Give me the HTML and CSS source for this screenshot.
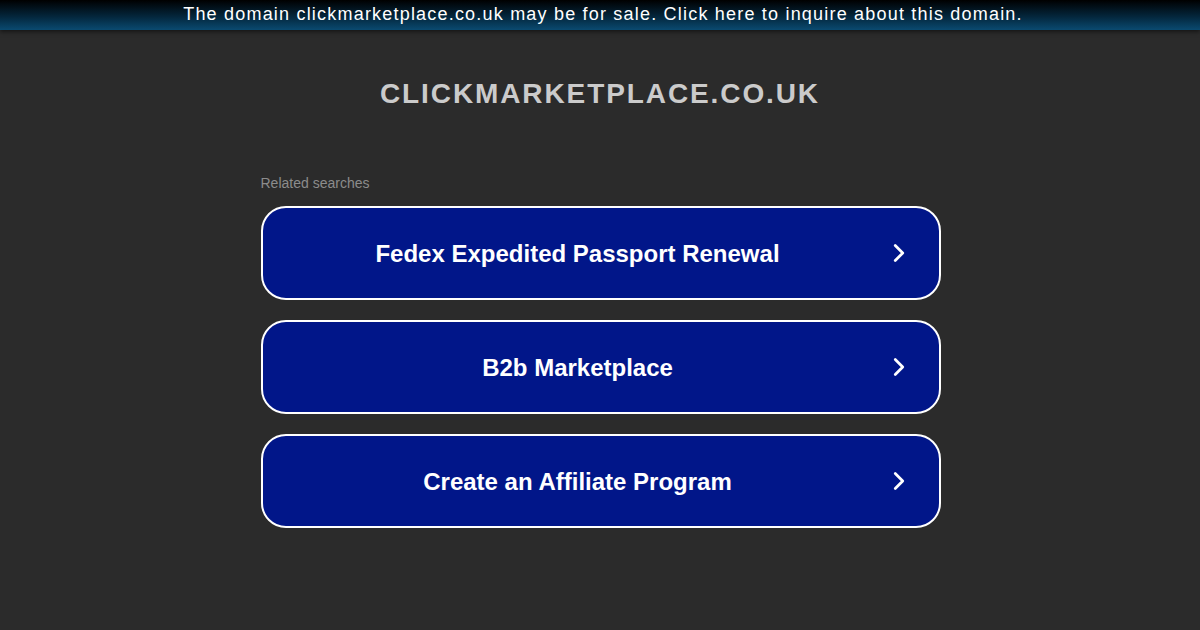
FILE: index.html
```html
<!doctype html>
<html lang="en">
  <head>
    <meta charset="UTF-8" />
    <meta name="viewport" content="width=device-width, initial-scale=1.0" />
    <title>clickmarketplace.co.uk</title>
    <link rel="stylesheet" href="styles.css">
  </head>
  <body>
    <div class="sale-bar">The domain clickmarketplace.co.uk may be for sale. Click here to inquire about this domain.</div>

    <h1 class="domain">clickmarketplace.co.uk</h1>

    <div class="searches">
      <div class="label">Related searches</div>
      <a class="search" href="#">
        <span>Fedex Expedited Passport Renewal</span>
        <svg class="arrow" viewBox="0 0 16 16"><path d="M5 2 L11 8 L5 14" /></svg>
      </a>
      <a class="search" href="#">
        <span>B2b Marketplace</span>
        <svg class="arrow" viewBox="0 0 16 16"><path d="M5 2 L11 8 L5 14" /></svg>
      </a>
      <a class="search" href="#">
        <span>Create an Affiliate Program</span>
        <svg class="arrow" viewBox="0 0 16 16"><path d="M5 2 L11 8 L5 14" /></svg>
      </a>
    </div>
  </body>
</html>
```

FILE: styles.css
```css
body {
  margin: 0;
  background-color: #2b2b2b;
  font-family: Arial, "Liberation Sans", sans-serif;
}
.sale-bar {
  height: 30px;
  line-height: 28px;
  padding-left: 6px;
  text-align: center;
  color: #fff;
  font-size: 18px;
  letter-spacing: 1.2px;
  background: linear-gradient(to bottom, #000 0%, #04263c 55%, #0a4a70 100%);
  box-shadow: 0 2px 4px rgba(0, 0, 0, 0.5);
}
.domain {
  margin: 47px 0 0;
  text-align: center;
  text-transform: uppercase;
  color: #cbcbcb;
  font-size: 28px;
  letter-spacing: 1.9px;
  line-height: 34px;
}
.searches {
  width: 680px;
  margin: 64px auto 0;
  padding-left: 1px;
}
.label {
  color: #8c8c8c;
  font-size: 14px;
  line-height: 16px;
  margin-bottom: 15px;
}
.search {
  display: flex;
  align-items: center;
  justify-content: center;
  position: relative;
  box-sizing: border-box;
  height: 94px;
  padding-top: 2px;
  margin-bottom: 20px;
  border: 2px solid #fff;
  border-radius: 25px;
  background-color: #011689;
  color: #fff;
  text-decoration: none;
  font-size: 24px;
  font-weight: bold;
  padding-right: 46px;
}
.arrow {
  position: absolute;
  right: 30px;
  top: 35px;
  width: 20px;
  height: 20px;
  fill: none;
  stroke: #fff;
  stroke-width: 2.2;
  stroke-linecap: round;
  stroke-linejoin: round;
}
```
